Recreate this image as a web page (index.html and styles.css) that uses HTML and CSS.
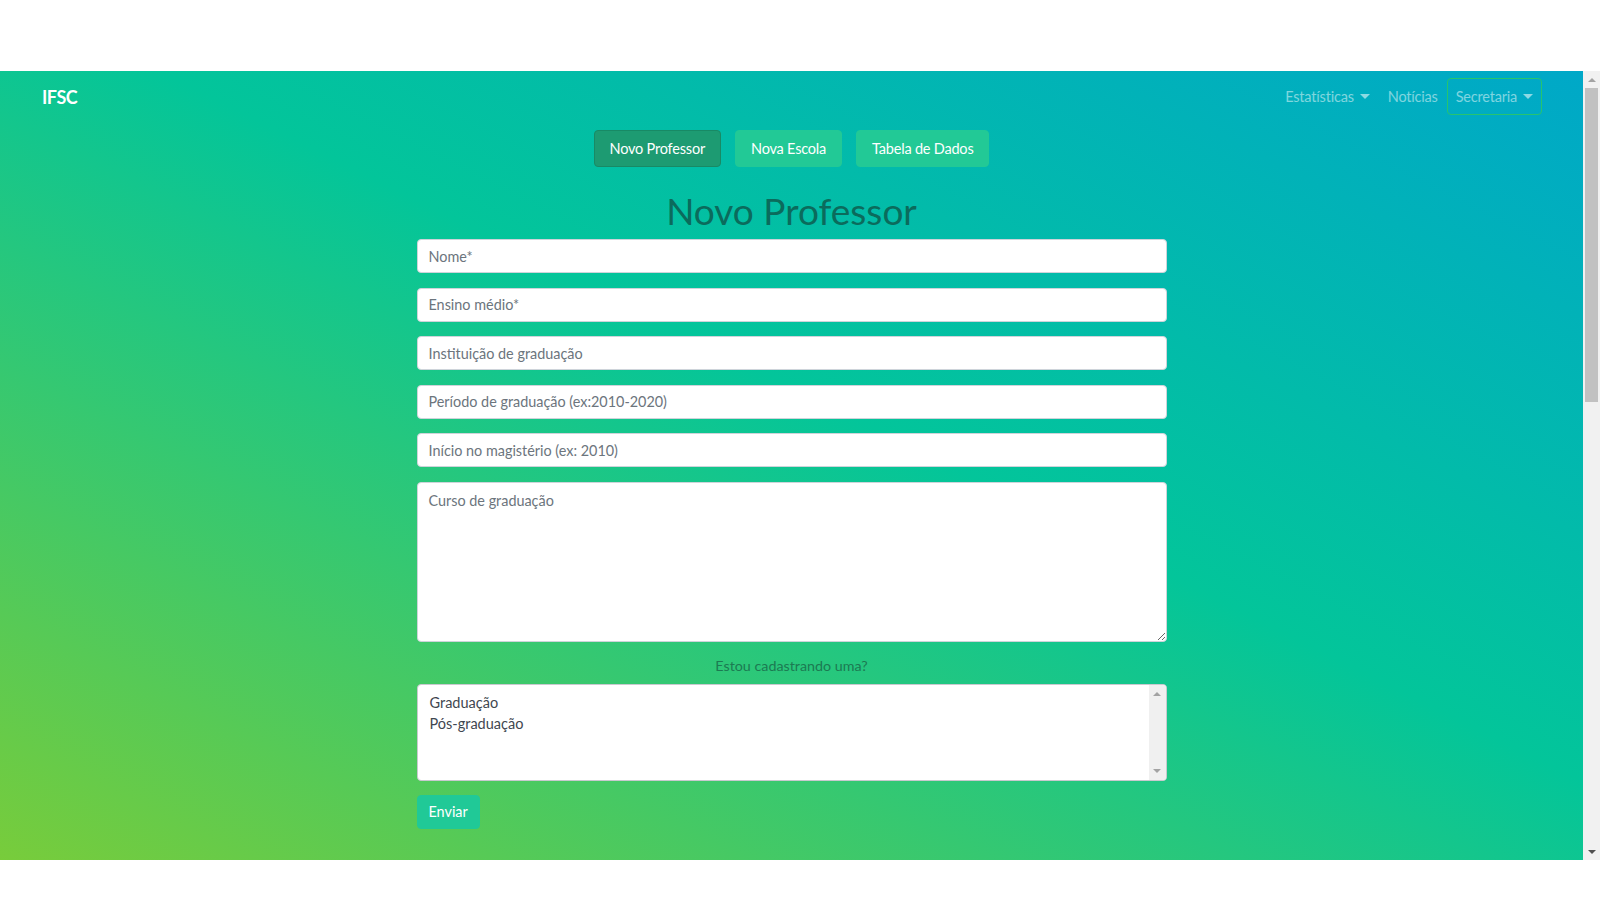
FILE: index.html
```html
<!DOCTYPE html>
<html lang="pt-BR">
<head>
<meta charset="utf-8">
<title>IFSC - Novo Professor</title>
<link rel="stylesheet" href="styles.css">
</head>
<body>
<div class="viewport">
  <div class="app">
    <nav class="navbar">
      <a class="brand" href="#">IFSC</a>
      <ul class="nav">
        <li><a class="nav-link caret" href="#">Estatísticas</a></li>
        <li><a class="nav-link" href="#">Notícias</a></li>
        <li><a class="nav-link caret outlined" href="#">Secretaria</a></li>
      </ul>
    </nav>

    <div class="tabs">
      <button class="btn btn-tab active">Novo Professor</button>
      <button class="btn btn-tab">Nova Escola</button>
      <button class="btn btn-tab">Tabela de Dados</button>
    </div>

    <h1 class="title">Novo Professor</h1>

    <form class="form">
      <input class="field" type="text" placeholder="Nome*">
      <input class="field" type="text" placeholder="Ensino médio*">
      <input class="field" type="text" placeholder="Instituição de graduação">
      <input class="field" type="text" placeholder="Período de graduação (ex:2010-2020)">
      <input class="field" type="text" placeholder="Início no magistério (ex: 2010)">
      <textarea class="field area" placeholder="Curso de graduação"></textarea>
      <label class="question">Estou cadastrando uma?</label>
      <div class="listbox" role="listbox">
        <div class="options">
          <div class="option" role="option">Graduação</div>
          <div class="option" role="option">Pós-graduação</div>
        </div>
        <div class="lb-scroll">
          <span class="arrow-up"></span>
          <span class="arrow-down"></span>
        </div>
      </div>
      <button class="btn btn-send" type="button">Enviar</button>
    </form>
  </div>
  <div class="scrollbar">
    <span class="sb-btn"><span class="arrow-up"></span></span>
    <span class="sb-thumb"></span>
    <span class="sb-space"></span>
    <span class="sb-btn"><span class="arrow-down dark"></span></span>
  </div>
</div>
</body>
</html>
```

FILE: styles.css
```css
* { box-sizing: border-box; }

html, body {
  margin: 0;
  padding: 0;
  background: #ffffff;
  font-family: "Segoe UI", Lato, "Noto Sans", sans-serif;
}

body { padding-top: 71px; height: 900px; }

.viewport {
  display: flex;
  height: 789px;
}

.app {
  flex: 1;
  overflow: hidden;
  background: linear-gradient(to top right, #78cc3b 0%, #03c59a 55%, #00a8c8 100%);
}

/* navbar */
.navbar {
  display: flex;
  justify-content: space-between;
  align-items: center;
  padding: 7px 41px 0 42px;
}

.brand {
  color: #ffffff;
  font-size: 18px;
  letter-spacing: -0.5px;
  font-weight: 700;
  text-decoration: none;
}

.nav {
  display: flex;
  list-style: none;
  margin: 0;
  padding: 0;
}

.nav-link {
  display: flex;
  align-items: center;
  height: 37px;
  padding: 0 8px;
  font-size: 14.5px;
  letter-spacing: -0.2px;
  color: rgba(255, 255, 255, 0.5);
  text-decoration: none;
  border: 1px solid transparent;
  border-radius: 4px;
}

.nav-link.caret::after {
  content: "";
  margin-left: 6px;
  border-top: 5px solid rgba(255, 255, 255, 0.55);
  border-left: 5px solid transparent;
  border-right: 5px solid transparent;
}

.nav-link.outlined {
  border-color: #27c46f;
}

/* top buttons */
.tabs {
  display: flex;
  justify-content: center;
  gap: 14px;
  margin-top: 15px;
}

.btn {
  font-family: inherit;
  color: #ffffff;
  border-radius: 4px;
  cursor: pointer;
}

.btn-tab {
  height: 37px;
  padding: 0 15px;
  font-size: 14.5px;
  letter-spacing: -0.2px;
  background: #22c996;
  border: 1px solid #22c996;
}

.btn-tab.active {
  background: #1d9b72;
  border-color: #188a65;
}

.title {
  margin: 20px 0 4px;
  text-align: center;
  font-size: 37px;
  line-height: 48px;
  font-weight: 400;
  color: #0b6b5c;
}

/* form */
.form {
  width: 750px;
  margin: 0 auto;
}

.field {
  display: block;
  width: 100%;
  height: 34px;
  margin: 0 0 14.6px;
  padding: 0 11px;
  font-family: inherit;
  font-size: 14.4px;
  color: #495057;
  background: #ffffff;
  border: 1px solid #ced4da;
  border-radius: 4px;
}

.field::placeholder { color: #6c757d; }

.area {
  height: 160px;
  padding: 7px 11px;
  line-height: 21px;
  margin-bottom: 13px;
  resize: vertical;
}

.question {
  display: block;
  text-align: center;
  font-size: 14.3px;
  line-height: 21px;
  margin-bottom: 8px;
  color: #1c7a52;
}

.listbox {
  display: flex;
  height: 97px;
  background: #ffffff;
  border: 1px solid #c9c9cf;
  border-radius: 4px;
  overflow: hidden;
}

.options {
  flex: 1;
  padding: 7px 12px;
  font-size: 14.5px;
  line-height: 21px;
  color: #3f4750;
}

.lb-scroll {
  width: 17px;
  background: #f0f0f0;
  display: flex;
  flex-direction: column;
  justify-content: space-between;
  align-items: center;
  padding: 7px 0 7px;
}

.arrow-up, .arrow-down {
  display: block;
  width: 0;
  height: 0;
  border-left: 4px solid transparent;
  border-right: 4px solid transparent;
}

.arrow-up { border-bottom: 4px solid #a3a3a3; }
.arrow-down { border-top: 4px solid #a3a3a3; }
.arrow-down.dark { border-top-color: #505050; }

.btn-send {
  margin-top: 14px;
  height: 34px;
  padding: 0 11px;
  font-size: 14.4px;
  background: #20c997;
  border: 1px solid #20c997;
}

/* window scrollbar */
.scrollbar {
  width: 17px;
  background: #f1f1f1;
  display: flex;
  flex-direction: column;
  align-items: center;
}

.sb-btn {
  height: 17px;
  width: 17px;
  display: flex;
  align-items: center;
  justify-content: center;
}

.sb-thumb {
  width: 13px;
  height: 314px;
  background: #c1c1c1;
}

.sb-space { flex: 1; }
```
